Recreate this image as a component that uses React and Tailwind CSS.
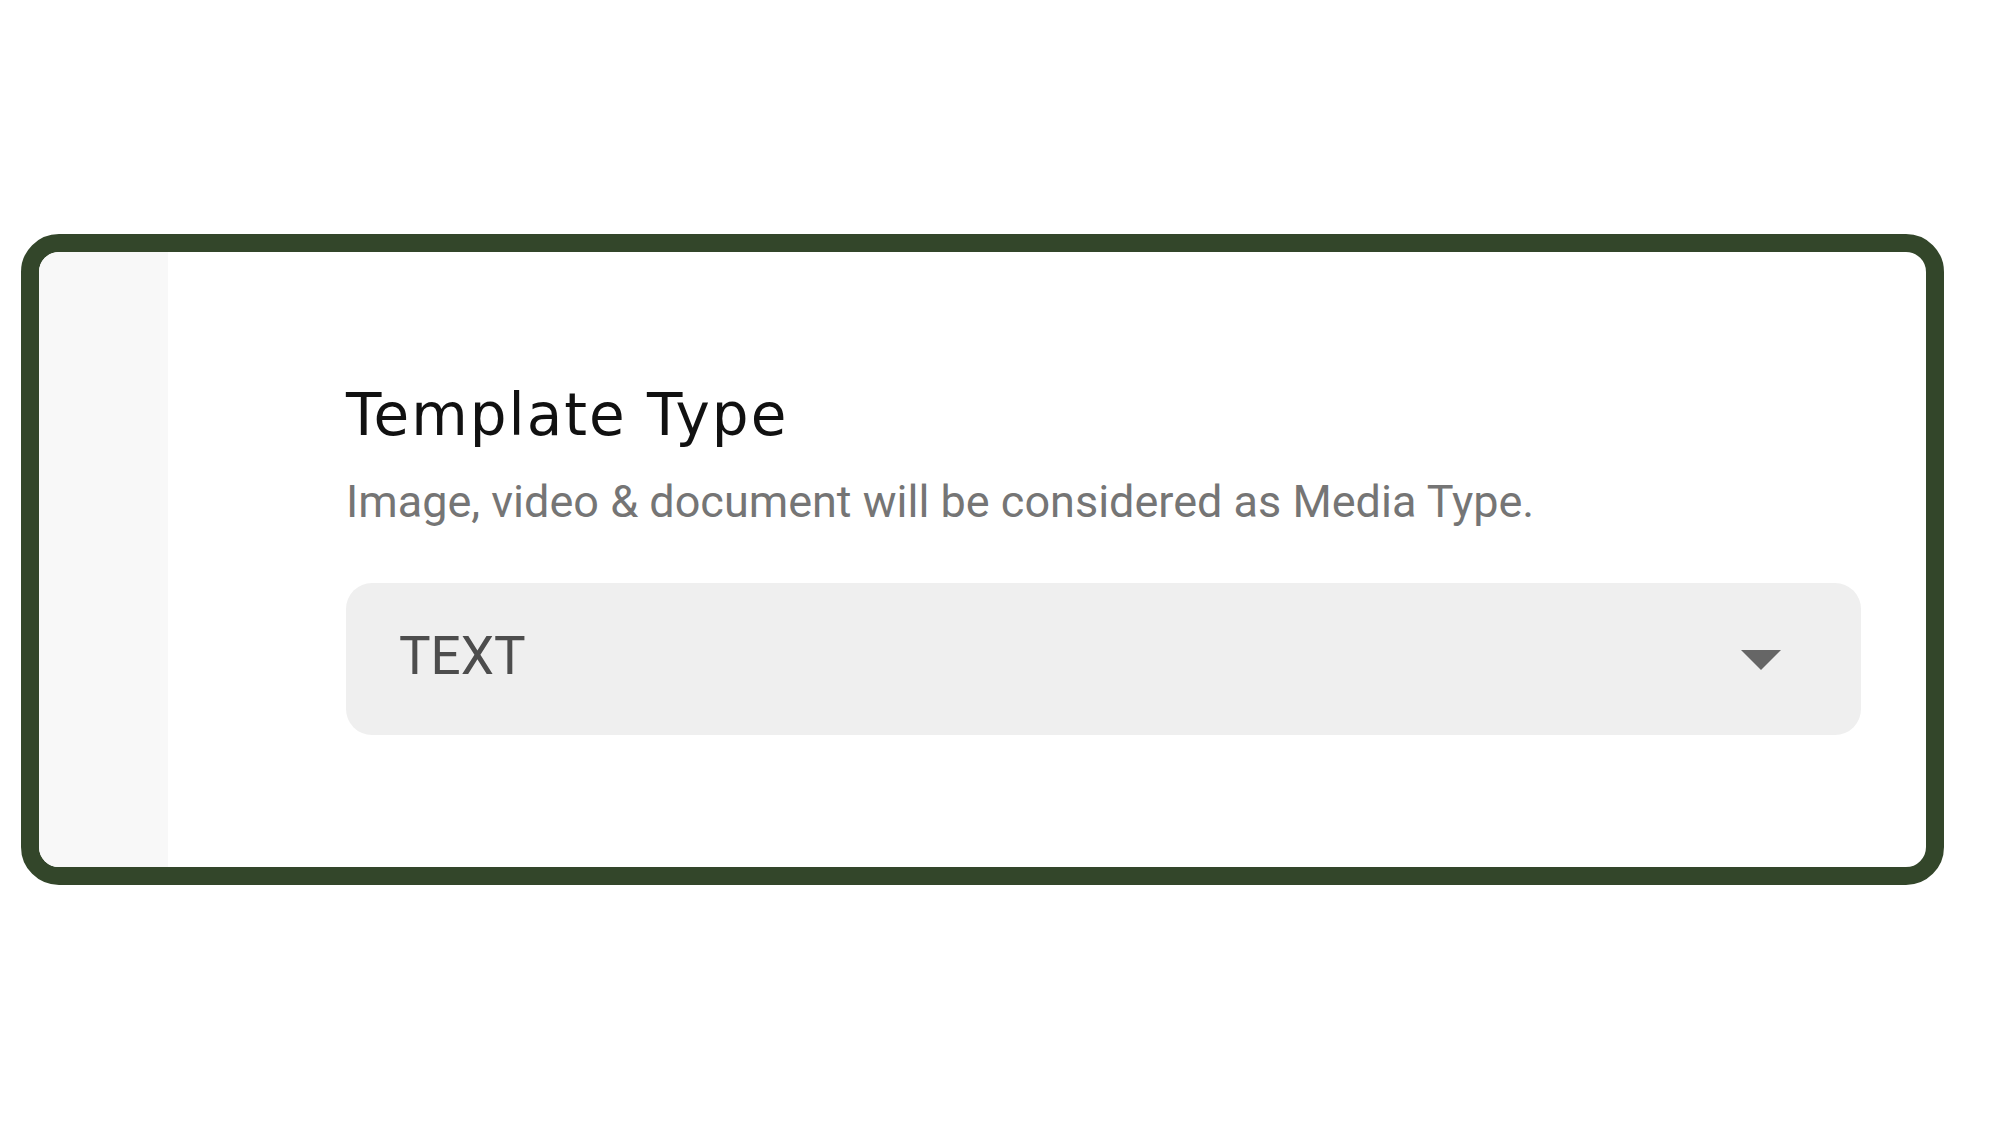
import React from 'react';

const TemplateTypeCard = () => {
  return (
    <div className="flex h-[651px] w-[1923px] overflow-hidden rounded-[38px] border-[18px] border-[#33462a] bg-white">
      <div className="w-[129px] shrink-0 bg-[#f8f8f8]" />
      <div className="flex flex-1 flex-col pl-[178px] pr-[65px] pt-[131px]">
        <h2 className="text-[58px] leading-[64px] tracking-[2px] text-[#111111] font-['DejaVu_Sans',sans-serif]">
          Template Type
        </h2>
        <p className="mt-[29px] text-[45px] leading-[52px] text-[#757575] font-['Roboto',sans-serif]">
          Image, video &amp; document will be considered as Media Type.
        </p>
        <button className="mt-[55px] flex h-[152px] w-full items-center justify-between rounded-[26px] bg-[#efefef] pl-[53px] pr-[80px] text-left">
          <span className="mb-[6px] text-[53px] leading-none text-[#4d4d4d] font-['Roboto',sans-serif]">TEXT</span>
          <svg width="40" height="20" viewBox="0 0 40 20" className="mt-[2px]">
            <path d="M0 0 L40 0 L20 20 Z" fill="#666666" />
          </svg>
        </button>
      </div>
    </div>
  );
};

export default function App() {
  return (
    <div className="h-[1125px] w-full bg-white pl-[21px] pt-[234px]">
      <TemplateTypeCard />
    </div>
  );
}
